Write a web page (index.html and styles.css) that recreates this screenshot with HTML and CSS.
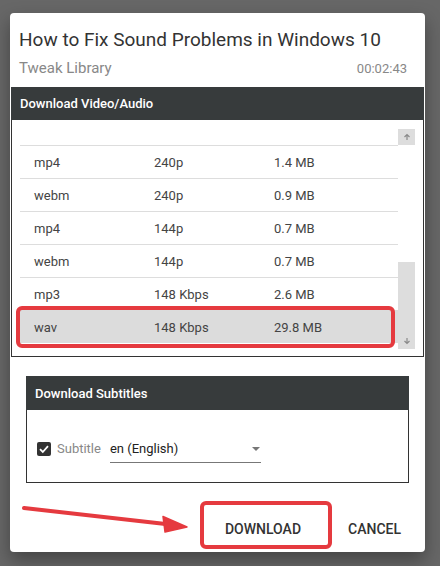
FILE: index.html
```html
<!DOCTYPE html>
<html lang="en">

<head>
    <meta charset="UTF-8">
    <meta name="viewport" content="width=device-width, initial-scale=1.0">
    <title>Download</title>
    <link rel="stylesheet" href="styles.css">
</head>

<body>
    <div class="dialog">
        <h1 class="title">How to Fix Sound Problems in Windows 10</h1>
        <div class="meta">
            <span>Tweak Library</span>
            <span class="time">00:02:43</span>
        </div>

        <div class="panel-head">Download Video/Audio</div>
        <div class="formats">
            <div class="list">
                <div class="row"><span>mp4</span><span>240p</span><span>1.4 MB</span></div>
                <div class="row"><span>webm</span><span>240p</span><span>0.9 MB</span></div>
                <div class="row"><span>mp4</span><span>144p</span><span>0.7 MB</span></div>
                <div class="row"><span>webm</span><span>144p</span><span>0.7 MB</span></div>
                <div class="row"><span>mp3</span><span>148 Kbps</span><span>2.6 MB</span></div>
                <div class="row picked"><span>wav</span><span>148 Kbps</span><span>29.8 MB</span></div>
            </div>
            <div class="scrollbar">
                <div class="scroll-btn">
                    <svg width="8" height="8" viewBox="0 0 8 8"><path d="M4 7V1.5M1.5 4L4 1.5L6.5 4" fill="none" stroke="#8a8a8a" stroke-width="1.2"/></svg>
                </div>
                <div class="track">
                    <div class="thumb">
                        <svg width="8" height="8" viewBox="0 0 8 8"><path d="M4 1v5.5M1.5 4L4 6.5L6.5 4" fill="none" stroke="#8a8a8a" stroke-width="1.2"/></svg>
                    </div>
                </div>
            </div>
        </div>

        <div class="subs">
            <div class="panel-head">Download Subtitles</div>
            <div class="subs-body">
                <span class="check">
                    <svg width="14" height="14" viewBox="0 0 14 14"><path d="M3 7.2L5.8 10L11 4.2" fill="none" stroke="#fff" stroke-width="1.8"/></svg>
                </span>
                <span class="label">Subtitle</span>
                <div class="select">
                    <span>en (English)</span>
                    <span class="caret"></span>
                </div>
            </div>
        </div>

        <div class="actions">
            <button class="btn marked">DOWNLOAD</button>
            <button class="btn">CANCEL</button>
        </div>
    </div>

    <!-- annotation arrow -->
    <svg class="arrow" width="440" height="566" viewBox="0 0 440 566">
        <line x1="24" y1="508" x2="170" y2="524.5" stroke="#e53a3f" stroke-width="4" stroke-linecap="round"/>
        <path d="M163 516.5L187 527L165 532Z" fill="#e53a3f" stroke="#e53a3f" stroke-width="1.5" stroke-linejoin="round"/>
    </svg>
</body>

</html>
```

FILE: styles.css
```css
body {
    margin: 0;
    height: 566px;
    background-color: #676767;
    font-family: Roboto, "Liberation Sans", sans-serif;
    overflow: hidden;
}

.dialog {
    width: 415px;
    height: 539px;
    margin: 13px 0 0 10px;
    background-color: #fff;
    border-radius: 4px;
    box-shadow: 0 8px 18px rgba(0, 0, 0, 0.35);
    box-sizing: border-box;
    padding-top: 13px;
    display: flex;
    flex-direction: column;
}

.title {
    margin: 0 0 0 9px;
    font-size: 19px;
    line-height: 28px;
    font-weight: 400;
    color: #333;
}

.meta {
    display: flex;
    justify-content: space-between;
    align-items: baseline;
    margin: 5px 18px 0 9px;
    height: 28px;
    font-size: 15px;
    color: #888;
}

.meta .time {
    font-size: 13px;
}

.panel-head {
    height: 33px;
    margin: 0 1px;
    padding-left: 9px;
    display: flex;
    align-items: center;
    background-color: #373b3c;
    color: #fff;
    font-size: 13px;
    font-weight: 500;
}

.formats {
    display: flex;
    margin: 0 1px;
    border: 1px solid #333;
    border-top: none;
}

.list {
    flex: 1;
    padding: 25px 0 13px 8px;
}

.row {
    display: flex;
    height: 32px;
    align-items: center;
    border-top: 1px solid #ddd;
    font-size: 13px;
    color: #444;
}

.row span {
    width: 120px;
    padding-left: 14px;
    box-sizing: border-box;
}

.row.picked {
    position: relative;
    background-color: #dcdcdc;
    border-top-color: #dcdcdc;
}

.row.picked::after {
    content: "";
    position: absolute;
    top: -5px;
    bottom: -5px;
    left: -4px;
    right: 3px;
    border: 4px solid #e53a3f;
    border-radius: 6px;
}

.scrollbar {
    width: 17px;
    margin-right: 8px;
    padding: 9px 0 7px;
    display: flex;
    flex-direction: column;
}

.scroll-btn {
    height: 16px;
    background-color: #ddd;
    display: flex;
    justify-content: center;
    align-items: center;
}

.track {
    flex: 1;
    display: flex;
    flex-direction: column;
    justify-content: flex-end;
}

.thumb {
    height: 87px;
    background-color: #ddd;
    display: flex;
    justify-content: center;
    align-items: flex-end;
    padding-bottom: 4px;
    box-sizing: border-box;
}

.subs {
    margin: 19px 16px 0;
}

.subs .panel-head {
    margin: 0;
    height: 34px;
}

.subs-body {
    display: flex;
    align-items: flex-start;
    padding: 28px 10px 19px;
    border: 1px solid #333;
    border-top: none;
}

.check {
    width: 14px;
    height: 14px;
    margin-top: 4px;
    border-radius: 2px;
    background-color: #333;
    display: flex;
}

.label {
    margin-left: 6px;
    line-height: 22px;
    font-size: 13px;
    color: #888;
}

.select {
    width: 151px;
    height: 25px;
    margin-left: 9px;
    box-sizing: border-box;
    border-bottom: 1px solid #777;
    display: flex;
    justify-content: space-between;
    line-height: 22px;
    font-size: 13px;
    color: #222;
}

.caret {
    width: 0;
    height: 0;
    margin: 9px 1px 0 0;
    border-left: 4px solid transparent;
    border-right: 4px solid transparent;
    border-top: 4px solid #777;
}

.actions {
    display: flex;
    justify-content: flex-end;
    gap: 31px;
    margin: 28px 16px 0 0;
}

.btn {
    height: 36px;
    padding: 0 8px;
    border: none;
    background: none;
    font-family: Roboto, "Liberation Sans", sans-serif;
    font-size: 14px;
    font-weight: 500;
    color: #333;
    cursor: pointer;
}

.btn.marked {
    position: relative;
}

.btn.marked::after {
    content: "";
    position: absolute;
    top: -10px;
    bottom: -2px;
    left: -17px;
    right: -23px;
    border: 4px solid #e53a3f;
    border-radius: 6px;
}

.arrow {
    position: absolute;
    left: 0;
    top: 0;
    pointer-events: none;
}
```
